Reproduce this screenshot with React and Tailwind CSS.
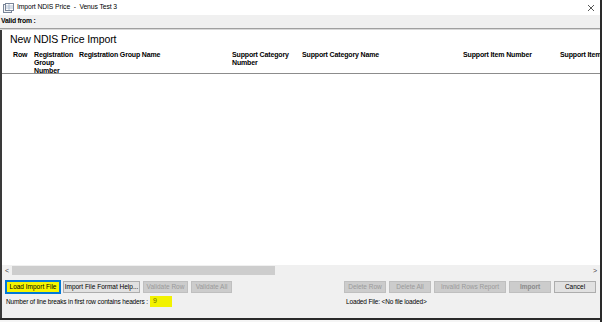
import React from 'react';

const headers = [
  { label: 'Row', w: 'w-[32px] pl-[11px]' },
  { label: 'Registration Group Number', w: 'w-[45px] pr-[5px]' },
  { label: 'Registration Group Name', w: 'w-[153px]' },
  { label: 'Support Category Number', w: 'w-[70px] pr-[6px]' },
  { label: 'Support Category Name', w: 'w-[161px]' },
  { label: 'Support Item Number', w: 'w-[97px]' },
  { label: 'Support Item Name', w: 'w-[120px] whitespace-nowrap' },
];

function Btn({ children, w, disabled, highlight }) {
  let cls = 'border-[#adadad] bg-[#e1e1e1] text-black';
  if (disabled) cls = 'border-[#bfbfbf] bg-[#cccccc] text-[#9a9a9a]';
  if (highlight) cls = 'border-[#0078d7] bg-[#f5f500] text-black outline outline-1 outline-[#0078d7]';
  return (
    <div className={`${w} h-[12px] border flex items-center justify-center text-[6.5px] leading-none ${cls}`}>
      {children}
    </div>
  );
}

export default function App() {
  return (
    <div
      className="w-[602px] h-[322px] bg-white flex flex-col overflow-hidden border-r-2 border-[#2a2a2a] text-black"
      style={{ fontFamily: '"Liberation Sans", Arial, sans-serif' }}
    >
      {/* Title bar */}
      <div className="h-[15px] flex items-center bg-white">
        <svg width="11" height="10" viewBox="0 0 11 10" className="ml-[3px] mr-[3px]">
          <rect x="0.5" y="1.5" width="8" height="8" fill="#f4f4f4" stroke="#7a8699" />
          <rect x="2.5" y="0.5" width="8" height="7" fill="#fff" stroke="#7a8699" />
          <path d="M3 3h7M3 5h7M6 1v6" stroke="#9fb0c8" strokeWidth="0.8" />
        </svg>
        <span className="text-[6.8px] tracking-[-0.1px]">Import NDIS Price&nbsp; - &nbsp;Venus Test 3</span>
        <svg width="8" height="8" viewBox="0 0 8 8" className="ml-auto mr-[5px]">
          <path d="M1 1L7 7M7 1L1 7" stroke="#444" strokeWidth="0.9" />
        </svg>
      </div>

      {/* Valid from */}
      <div className="h-[13px] bg-[#f0f0f0] flex items-center pl-[1px]">
        <span className="text-[6.8px] font-bold tracking-[-0.2px]">Valid from :</span>
      </div>
      <div className="h-[1px] bg-[#a0a0a0]" />
      <div className="h-[1px] bg-[#d9d9d9]" />

      {/* Grid area */}
      <div className="flex-1 flex flex-col border-l-2 border-[#3a3a3a] bg-white min-h-0">
        <div className="h-[235px] flex flex-col">
          <div className="pl-[8px] pt-[4px] h-[19px] text-[10.5px] leading-none tracking-[-0.1px]">
            New NDIS Price Import
          </div>
          <div className="flex h-[25px] pt-[2px] border-b border-[#8c8c8c] overflow-hidden">
            {headers.map((h) => (
              <div
                key={h.label}
                className={`${h.w} shrink-0 text-[7px] font-bold leading-[7.8px] tracking-[-0.15px]`}
              >
                {h.label}
              </div>
            ))}
          </div>
          <div className="flex-1" />
        </div>

        {/* Horizontal scrollbar */}
        <div className="h-[11px] bg-[#f0f0f0] flex items-center">
          <span className="w-[10px] text-center text-[7px] leading-none text-[#444]">&lt;</span>
          <div className="w-[263px] h-[9px] bg-[#cdcdcd]" />
          <div className="flex-1" />
          <span className="w-[10px] text-center text-[7px] leading-none text-[#444]">&gt;</span>
        </div>

        {/* Bottom panel */}
        <div className="h-[42px] bg-[#f0f0f0] flex flex-col pt-[5px] px-[4px]">
          <div className="flex items-center">
            <div className="flex gap-[3px]">
              <Btn w="w-[54px]" highlight>Load Import File</Btn>
              <Btn w="w-[77px]">Import File Format Help...</Btn>
              <Btn w="w-[45px]" disabled>Validate Row</Btn>
              <Btn w="w-[41px]" disabled>Validate All</Btn>
            </div>
            <div className="ml-auto flex gap-[3px]">
              <Btn w="w-[42px]" disabled>Delete Row</Btn>
              <Btn w="w-[42px]" disabled>Delete All</Btn>
              <Btn w="w-[72px]" disabled>Invalid Rows Report</Btn>
              <Btn w="w-[42px]" disabled>
                <span className="text-[#8a8a8a] font-bold">Import</span>
              </Btn>
              <Btn w="w-[42px]">Cancel</Btn>
            </div>
          </div>
          <div className="flex items-center mt-[3px]">
            <span className="text-[6.5px] tracking-[-0.15px]">Number of line breaks in first row contains headers :</span>
            <div className="ml-[2px] w-[22px] h-[11px] bg-[#f2f200] flex items-center pl-[3px] text-[7px] text-[#6b6b00]">
              9
            </div>
            <span className="ml-[174px] text-[6.5px] tracking-[-0.15px]">Loaded File: &lt;No file loaded&gt;</span>
          </div>
        </div>
      </div>
      <div className="h-[2px] bg-[#2a2a2a]" />
      <div className="h-[2px] bg-[#f5f5f5]" />
    </div>
  );
}
